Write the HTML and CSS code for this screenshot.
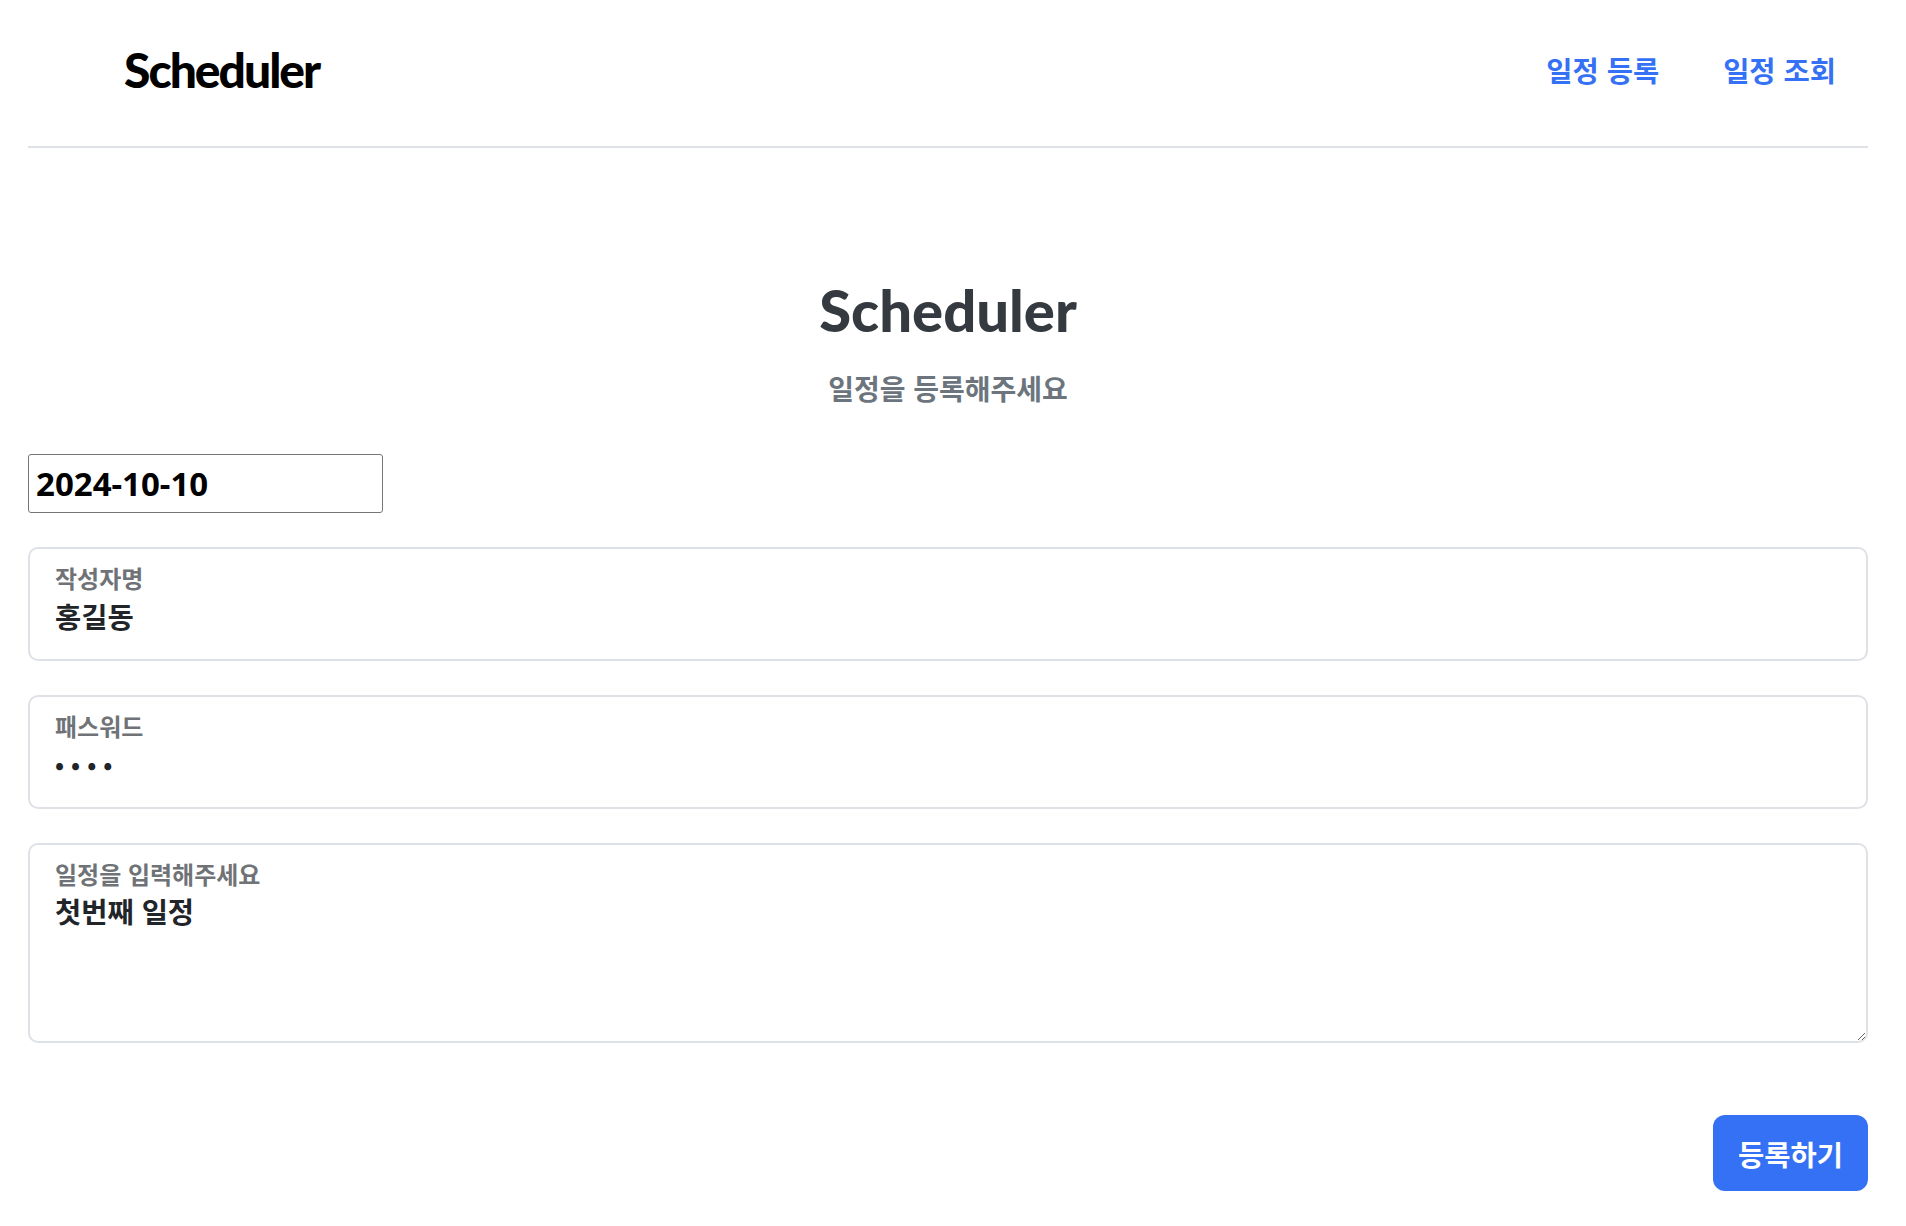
FILE: index.html
```html
<!DOCTYPE html>
<html lang="ko">
<head>
<meta charset="utf-8">
<title>Scheduler</title>
<link rel="stylesheet" href="styles.css">
</head>
<body>
<div class="page">
  <header class="header">
    <div class="logo">Scheduler</div>
    <nav class="nav">
      <a class="nav-link" href="#">일정 등록</a>
      <a class="nav-link" href="#">일정 조회</a>
    </nav>
  </header>
  <main class="main">
    <h1 class="title">Scheduler</h1>
    <p class="subtitle">일정을 등록해주세요</p>
    <input class="date-input" type="text" value="2024-10-10">
    <div class="field">
      <input class="field-control" id="author" type="text" value="홍길동">
      <label class="field-label" for="author">작성자명</label>
    </div>
    <div class="field">
      <input class="field-control field-password" id="pw" type="password" value="1234">
      <label class="field-label" for="pw">패스워드</label>
    </div>
    <div class="field">
      <textarea class="field-control field-area" id="todo">첫번째 일정</textarea>
      <label class="field-label" for="todo">일정을 입력해주세요</label>
    </div>
    <div class="actions">
      <button class="submit" type="button">등록하기</button>
    </div>
  </main>
</div>
</body>
</html>
```

FILE: styles.css
```css
* { box-sizing: border-box; }
html, body { margin: 0; padding: 0; background: #fff; }
body {
  font-family: "Noto Sans CJK KR", "Noto Sans", sans-serif;
  color: #212529;
}
.page {
  padding: 0 38px 0 28px;
}
.header {
  height: 148px;
  display: flex;
  align-items: center;
  justify-content: space-between;
  padding: 0 32px 6px 96px;
  border-bottom: 2px solid #dee2e6;
}
.logo {
  font-family: Lato, "Noto Sans", sans-serif;
  font-weight: 900;
  font-size: 48px;
  letter-spacing: -2px;
  color: #000;
  line-height: 54px;
}
.nav {
  display: flex;
  gap: 64px;
}
.nav-link {
  font-size: 28.5px;
  font-weight: 700;
  color: #3571f5;
  text-decoration: none;
  line-height: 36px;
}
.main {
  display: flex;
  flex-direction: column;
}
.title {
  margin: 126px 0 0;
  text-align: center;
  font-family: Lato, "Noto Sans", sans-serif;
  font-weight: 900;
  font-size: 58px;
  line-height: 72px;
  color: #343a40;
}
.subtitle {
  margin: 22px 0 0;
  text-align: center;
  font-size: 28px;
  font-weight: 700;
  line-height: 40px;
  color: #6c757d;
}
.date-input {
  margin-top: 46px;
  width: 355px;
  height: 59px;
  border: 1px solid #767676;
  border-radius: 3px;
  padding: 0 7px;
  font-family: "Noto Sans", "Noto Sans CJK KR", sans-serif;
  font-size: 33px;
  font-weight: 700;
  color: #000;
  outline: none;
}
.field {
  position: relative;
  margin-top: 34px;
}
.field-control {
  display: block;
  width: 100%;
  height: 114px;
  border: 2px solid #dee2e6;
  border-radius: 10px;
  padding: 49px 25px 27px;
  font-family: "Noto Sans CJK KR", "Noto Sans", sans-serif;
  font-size: 28.5px;
  font-weight: 700;
  line-height: 34px;
  color: #212529;
  background: #fff;
  outline: none;
}
.field-password {
  letter-spacing: 7px;
  font-size: 24px;
}
.field-area {
  height: 200px;
  padding: 49px 25px 0;
  resize: vertical;
}
.field-label {
  position: absolute;
  top: 17px;
  left: 27px;
  font-size: 24px;
  font-weight: 700;
  line-height: 28px;
  color: #6f7377;
  pointer-events: none;
}
.actions {
  display: flex;
  justify-content: flex-end;
  margin-top: 72px;
}
.submit {
  width: 155px;
  height: 76px;
  border: none;
  border-radius: 12px;
  background: #3571f5;
  color: #fff;
  font-family: "Noto Sans CJK KR", sans-serif;
  font-size: 28.5px;
  font-weight: 700;
  padding: 0;
}
```
